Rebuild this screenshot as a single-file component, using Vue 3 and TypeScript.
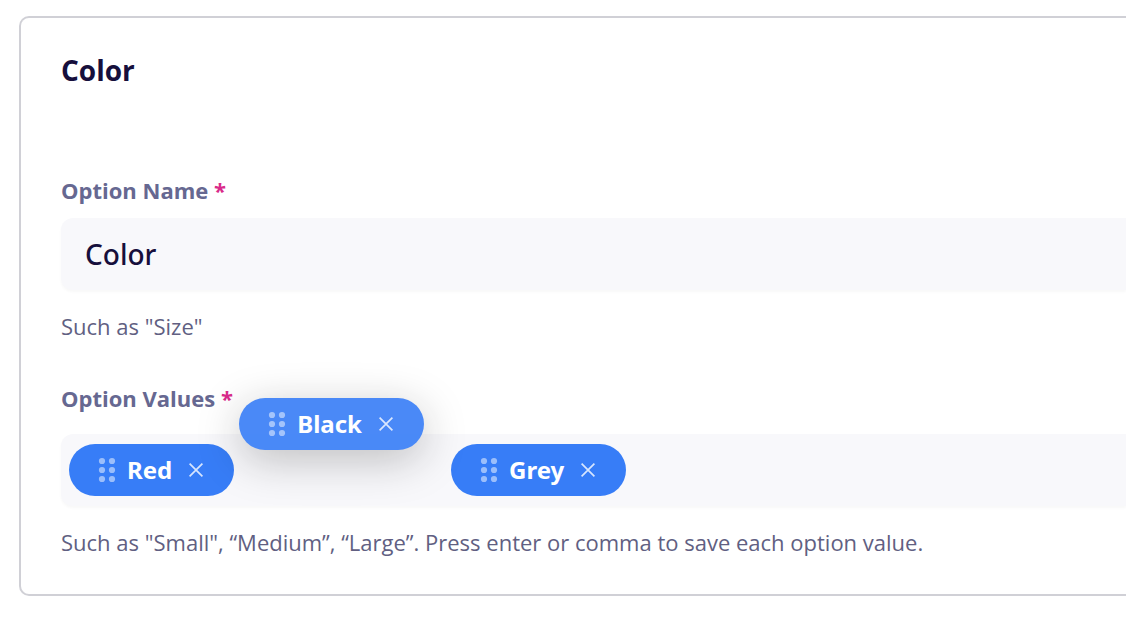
<script setup lang="ts">
import { ref } from 'vue'

interface OptionValue {
  label: string
  dragging: boolean
}

const optionName = ref('Color')
const draft = ref('')
const values = ref<OptionValue[]>([
  { label: 'Red', dragging: false },
  { label: 'Black', dragging: true },
  { label: 'Grey', dragging: false },
])

function addValue() {
  const label = draft.value.replace(/,/g, '').trim()
  if (label) values.value.push({ label, dragging: false })
  draft.value = ''
}

function removeValue(index: number) {
  values.value.splice(index, 1)
}
</script>

<template>
  <main class="page">
    <section class="card">
      <h2 class="title">{{ optionName }}</h2>

      <div class="field">
        <label class="label" for="option-name">Option Name <span class="required">*</span></label>
        <input id="option-name" v-model="optionName" class="control text-input" type="text" required />
        <p class="hint">Such as "Size"</p>
      </div>

      <div class="field values-field">
        <label class="label" for="option-values">Option Values <span class="required">*</span></label>
        <div class="control chips">
          <div
            v-for="(value, index) in values"
            :key="value.label"
            class="chip"
            :class="{ dragging: value.dragging }"
          >
            <svg class="grip" viewBox="0 0 16 24" aria-hidden="true">
              <circle cx="3" cy="3" r="3.1" />
              <circle cx="13" cy="3" r="3.1" />
              <circle cx="3" cy="12" r="3.1" />
              <circle cx="13" cy="12" r="3.1" />
              <circle cx="3" cy="21" r="3.1" />
              <circle cx="13" cy="21" r="3.1" />
            </svg>
            <span class="chip-label">{{ value.label }}</span>
            <button class="remove" type="button" :aria-label="`Remove ${value.label}`" @click="removeValue(index)">
              <svg viewBox="0 0 14 14" aria-hidden="true">
                <path d="M0.6 0.6L13.4 13.4M13.4 0.6L0.6 13.4" />
              </svg>
            </button>
          </div>
          <input
            id="option-values"
            v-model="draft"
            class="draft"
            type="text"
            @keydown.enter.prevent="addValue"
            @keydown.,.prevent="addValue"
          />
        </div>
        <p class="hint">Such as "Small", “Medium”, “Large”. Press enter or comma to save each option value.</p>
      </div>
    </section>
  </main>
</template>

<style>
body {
  background: #fff;
}
</style>

<style scoped>
.page {
  padding: 16px 0 24px 19px;
  font-family: 'Open Sans', 'Noto Sans', sans-serif;
  color: #160f3c;
}

.card {
  padding: 33px 0 37px 40px;
  border: 2px solid #d0d0d6;
  border-right: 0;
  border-radius: 10px 0 0 10px;
}

.title {
  margin: 0 0 86px;
  font-size: 28px;
  line-height: 38px;
  font-weight: 700;
}

.field {
  display: flex;
  flex-direction: column;
}

.values-field {
  margin-top: 42px;
}

.label {
  margin-bottom: 13px;
  font-size: 22px;
  line-height: 30px;
  font-weight: 700;
  color: #666891;
}

.values-field .label {
  margin-bottom: 21px;
}

.required {
  color: #d92b8a;
}

.control {
  box-sizing: border-box;
  height: 72px;
  border: 0;
  border-radius: 12px 0 0 12px;
  background: #f8f8fb;
  box-shadow: 0 2px 3px rgba(0, 0, 0, 0.03);
}

.text-input {
  width: 100%;
  padding: 0 24px;
  font: 500 28px/38px 'Noto Sans', 'Open Sans', sans-serif;
  color: #160f3c;
  outline: none;
}

.chips {
  display: flex;
  align-items: center;
  gap: 16px;
  padding: 0 8px;
}

.chip {
  display: flex;
  flex: none;
  align-items: center;
  height: 52px;
  padding: 0 31px 0 30px;
  border-radius: 26px;
  background: #377df7;
  color: #fff;
}

.dragging {
  position: relative;
  top: -46px;
  left: -11px;
  z-index: 1;
  opacity: 0.9;
  box-shadow: 0 10px 44px rgba(0, 0, 0, 0.26);
}

.grip {
  width: 16px;
  height: 24px;
  margin-right: 12px;
  overflow: visible;
  fill: rgba(255, 255, 255, 0.5);
}

.chip-label {
  font-family: 'Noto Sans', 'Open Sans', sans-serif;
  font-size: 24px;
  line-height: 32px;
  font-weight: 700;
}

.remove {
  display: flex;
  margin: 0 0 0 17px;
  padding: 0;
  border: 0;
  background: none;
  cursor: pointer;
}

.remove svg {
  width: 14px;
  height: 14px;
  fill: none;
  stroke: rgba(255, 255, 255, 0.8);
  stroke-width: 1.7;
}

.draft {
  flex: 1;
  min-width: 0;
  height: 52px;
  padding: 0;
  border: 0;
  background: none;
  font: 400 24px/32px 'Open Sans', 'Noto Sans', sans-serif;
  color: #160f3c;
  outline: none;
}

.hint {
  margin: 21px 0 0;
  font-size: 22px;
  line-height: 30px;
  color: #615f82;
}
</style>
